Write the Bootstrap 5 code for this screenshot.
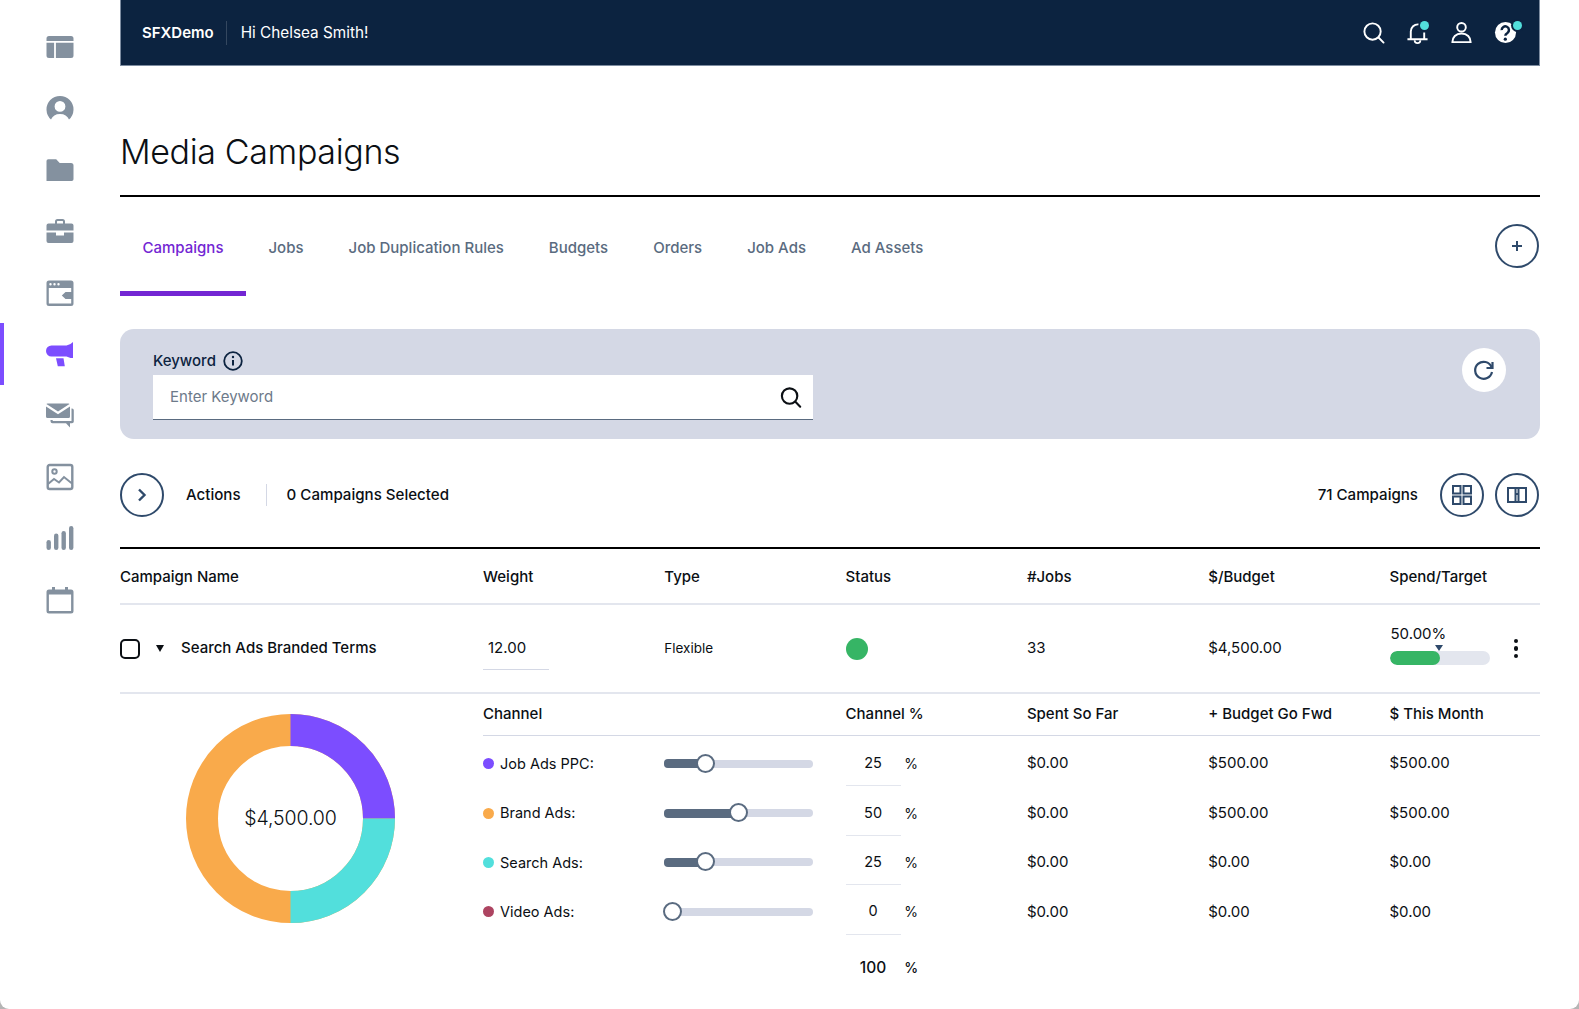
<!DOCTYPE html>
<html lang="en">
<head>
<meta charset="utf-8">
<title>Media Campaigns</title>
<link href="https://cdn.jsdelivr.net/npm/bootstrap@5.3.0/dist/css/bootstrap.min.css" rel="stylesheet">
<style>
html,body{height:100%;}
body{font-family:Inter,"Liberation Sans",sans-serif;color:#0b0f14;font-size:15px;background:#b5b5b5;overflow:hidden;}
.app-shell{background:#fff;border-radius:0 0 9px 9px;}
.side-rail{width:120px;flex:none;padding-top:16.500px;}
.rail-item{height:61.4px;display:flex;align-items:center;justify-content:center;color:#84919f;border-left:4px solid transparent;padding-right:5px;}
.rail-item.is-on{color:#7c4dff;border-left-color:#7c4dff;}
.rail-item svg{width:28px;height:28px;display:block;}
.page-wrap{width:1420px;flex:none;}
.top-strip{height:66px;background:#0c2340;border-bottom:1px solid #7d8ca0;border-left:1px solid #7d8ca0;border-right:1px solid #7d8ca0;padding:0 12px 0 21px;color:#fff;}
.brand-name{font-weight:600;font-size:15px;padding-right:12px;border-right:1px solid #34475f;line-height:24px;}
.hello{font-size:15.3px;padding:1px 0 0 14px;font-weight:400;}
.top-ico{width:44px;height:44px;position:relative;display:flex;align-items:center;justify-content:center;}
.top-ico svg{width:23px;height:23px;}
.teal-pip{position:absolute;width:9px;height:9px;border-radius:50%;background:#52dfdc;top:10px;right:10px;}
.teal-pip.is-ringed{right:5px;box-shadow:0 0 0 2px #0c2340;}
.page-head{font-weight:300;font-size:34px;line-height:44px;margin:0;padding:64px 0 21px 0;border-bottom:2px solid #000;color:#0b0f14;letter-spacing:-.35px;}
.tab-row{height:99px;}
.tab-row .nav-link{color:#5a6b80;font-weight:500;font-size:15px;padding:0 22.500px;height:99px;line-height:102px;border-bottom:5px solid transparent;}
.tab-row .nav-link.active{color:#7326d3;border-bottom-color:#7326d3;}
.ring-btn{width:44px;height:44px;border:2px solid #2f4a6b;border-radius:50%;background:#fff;padding:0;color:#2f4a6b;display:flex;align-items:center;justify-content:center;flex:none;}
.ring-btn svg{width:22px;height:22px;}
.tail-gap{margin-right:1px;}
.tab-add{margin-bottom:2px;}
.filter-box{height:110px;margin-top:33px;background:#d4d8e5;border-radius:14px;padding:18px 33px 0 33px;}
.filter-label{font-size:15px;font-weight:500;color:#0c2340;line-height:24px;height:28px;gap:7px;}
.key-field{width:660px;height:45px;background:#fff;border-bottom:1px solid #5a6b80;padding:0 11px 0 17px;}
.key-field .form-control{border:0;border-radius:0;padding:0;font-size:15px;box-shadow:none;background:transparent;color:#0b0f14;}
.key-field .form-control::placeholder{color:#6d7a8a;opacity:1;}
.reload-btn{width:44px;height:44px;background:#fff;border:0;border-radius:50%;padding:0;color:#2f4a6b;display:flex;align-items:center;justify-content:center;margin-top:1px;margin-right:1px;}
.act-row{height:110px;border-bottom:2px solid #000;padding-top:3px;}
.act-txt{font-weight:500;font-size:15.100px;padding-top:1px;}
.act-gap{margin-left:22px;}
.act-sep{width:1px;height:22px;background:#d4d8e5;margin:0 20px 0 25px;}
.count-gap{margin-right:22px;}
.grid-seven{display:grid;grid-template-columns:363px 181.300px 181.300px 181.300px 181.300px 181.300px 1fr;align-items:center;}
.head-row{height:56px;padding-top:2px;border-bottom:2px solid #e3e6ee;font-weight:500;font-size:15px;}
.camp-row{height:89px;border-bottom:2px solid #e3e6ee;font-size:15px;}
.camp-name{font-weight:500;font-size:15px;}
.tick-box{width:20px;height:20px;border:2px solid #0b0f14;border-radius:5px;margin-right:16px;flex:none;}
.mini-tri{width:0;height:0;border-left:4.500px solid transparent;border-right:4.500px solid transparent;border-top:7px solid #0b0f14;margin-right:17px;}
.weight-val{width:66px;height:42px;border-bottom:1px solid #d4d8e5;padding:9px 0 0 5px;line-height:22px;}
.type-val{font-size:13.500px;}
.stat-dot{width:22px;height:22px;border-radius:50%;background:#36b565;display:block;}
.spend-wrap{position:relative;width:100px;margin-top:-8px;margin-left:1px;}
.spend-pct{line-height:20px;font-weight:400;font-size:15px;}
.spend-bar{height:14px;border-radius:7px;background:#e3e6ee;margin-top:7px;overflow:hidden;}
.spend-fill{height:100%;border-radius:7px;background:#36b565;}
.spend-mark{position:absolute;top:21px;left:45px;width:0;height:0;border-left:4.500px solid transparent;border-right:4.500px solid transparent;border-top:6px solid #2f4a6b;}
.kebab{position:absolute;right:22px;top:0;bottom:0;display:flex;flex-direction:column;justify-content:center;gap:3px;}
.kebab i{display:block;width:4.500px;height:4.500px;border-radius:50%;background:#0b0f14;}
.detail-wrap{display:grid;grid-template-columns:363px 1fr;}
.ring-cell{height:270px;position:relative;}
.ring-svg{position:absolute;left:66px;top:20px;width:209px;height:209px;}
.ring-sum{position:absolute;left:66px;top:20px;width:209px;height:209px;display:flex;align-items:center;justify-content:center;font-size:19.500px;font-weight:300;letter-spacing:-.1px;}
.grid-six{display:grid;grid-template-columns:181.300px 181.300px 181.300px 181.300px 181.300px 1fr;align-items:center;}
.sub-head{height:42px;border-bottom:1px solid #d4d8e5;font-weight:500;font-size:15px;}
.sub-list{padding-top:3px;}
.sub-row{height:49.400px;font-size:15px;}
.sub-label{display:flex;align-items:center;font-size:14.500px;}
.chan-dot{width:11px;height:11px;border-radius:50%;margin-right:6px;flex:none;}
.slide-track{width:149px;height:8px;border-radius:4px;background:#d4d8e5;position:relative;}
.slide-fill{position:absolute;left:0;top:-.5px;height:9px;border-radius:4px;background:#5a6b80;}
.slide-knob{position:absolute;top:-6px;width:19px;height:19px;border-radius:50%;background:#fff;border:2px solid #5a6b80;}
.pct-cell{display:flex;align-items:center;height:100%;font-size:14.500px;}
.pct-input{width:55px;height:47.400px;padding-top:2px;align-self:flex-start;text-align:center;border-bottom:1px solid #e3e6ee;display:flex;align-items:center;justify-content:center;}
.pct-sign{margin-left:3px;width:15px;text-align:center;font-size:14px;}
.sum-row{height:62px;font-weight:500;}
.sum-row .pct-input{font-size:15.500px;align-self:center;padding-top:0;height:auto;}
</style>
</head>
<body>
<div class="app-shell d-flex h-100">
  <nav class="side-rail">
    <div class="rail-item"><svg viewBox="0 0 28 28"><path fill="currentColor" fill-rule="evenodd" d="M3 3h22a2.500 2.500 0 0 1 2.500 2.500V8H.5V5.500A2.500 2.500 0 0 1 3 3zM.5 9.800h7.600V25H3a2.500 2.500 0 0 1-2.500-2.500zM9.900 9.800h17.600v12.700A2.500 2.500 0 0 1 25 25H9.900z"/></svg></div>
    <div class="rail-item"><svg viewBox="0 0 28 28"><path fill="currentColor" fill-rule="evenodd" d="M5 24.500A13.500 13.500 0 1 1 23 24.500C21.500 21 18.500 19 14 19S6.500 21 5 24.500zM14 6a5.400 5.400 0 1 0 0 10.800A5.400 5.400 0 0 0 14 6z"/></svg></div>
    <div class="rail-item"><svg viewBox="0 0 28 28"><path fill="currentColor" d="M.5 5A1.800 1.800 0 0 1 2.300 3.200h7.900l3.500 3.800h11.300a2.500 2.500 0 0 1 2.500 2.500v13.700a1.800 1.800 0 0 1-1.800 1.800H.5z"/></svg></div>
    <div class="rail-item"><svg viewBox="0 0 28 28"><path fill="currentColor" fill-rule="evenodd" d="M9 6.500V4.500A2.500 2.500 0 0 1 11.500 2h5A2.500 2.500 0 0 1 19 4.500v2h6.500a2 2 0 0 1 2 2v5H.5v-5a2 2 0 0 1 2-2zm2 0h6V4.500a.5.5 0 0 0-.5-.5h-5a.5.5 0 0 0-.5.5zM.5 15.500h9.500v3h8v-3h9.500v8.500a2 2 0 0 1-2 2h-23a2 2 0 0 1-2-2z"/></svg></div>
    <div class="rail-item"><svg viewBox="0 0 28 28"><path fill="currentColor" fill-rule="evenodd" d="M3 1.500h22a2.500 2.500 0 0 1 2.500 2.500v20.500A2.500 2.500 0 0 1 25 27H3a2.500 2.500 0 0 1-2.500-2.500V4A2.500 2.500 0 0 1 3 1.500zM2.800 9v15.200c0 .2.100.3.300.3h21.800c.2 0 .3-.1.300-.3V20h-5.700l-3.700-3.500 3.700-3.500h5.700V9zM4.500 4a1.200 1.200 0 1 0 0 2.400 1.200 1.200 0 0 0 0-2.400zm4 0a1.200 1.200 0 1 0 0 2.400 1.200 1.200 0 0 0 0-2.400zm4 0a1.200 1.200 0 1 0 0 2.400 1.200 1.200 0 0 0 0-2.400z"/></svg></div>
    <div class="rail-item is-on"><svg viewBox="0 0 28 28"><path fill="currentColor" d="M5.500 5.500H20.500L24.500 4 27 2V18H24.500L20.500 16.500H5.500a5.500 5.500 0 0 1 0-11zM10 18.300h7.500l1.300 8H11.800z"/></svg></div>
    <div class="rail-item"><svg viewBox="0 0 28 28"><path fill="currentColor" d="M1.500 1.500h21a1.500 1.500 0 0 1 1 .5L12 9.500.4 2A1.500 1.500 0 0 1 1.500 1.500zM0 4.500l12 7.800 12-7.800V14.500a1.500 1.500 0 0 1-1.500 1.500h-21A1.500 1.500 0 0 1 0 14.500zM25.500 6.500h.5a1.800 1.800 0 0 1 1.800 1.800v11.200A1.800 1.800 0 0 1 26 21.300h-2v4.200l-4-4.200H6.500a2 2 0 0 1-2-2V18h2.200v1.100h18.800z"/></svg></div>
    <div class="rail-item"><svg viewBox="0 0 28 28" fill="none" stroke="currentColor" stroke-width="2.400"><rect x="1.700" y="2" width="24.600" height="24" rx="2"/><circle cx="8.500" cy="8.500" r="2.200" stroke-width="2"/><path d="M2 21l6-5 5 3.500 5-5.500 8 6.500" stroke-width="2"/></svg></div>
    <div class="rail-item"><svg viewBox="0 0 28 28"><rect x=".5" y="16" width="4.400" height="10" rx="2.200" fill="currentColor"/><rect x="8" y="9.500" width="4.400" height="16.500" rx="2.200" fill="currentColor"/><rect x="15.500" y="7" width="4.400" height="19" rx="2.200" fill="currentColor"/><rect x="23" y="2" width="4.400" height="24" rx="2.200" fill="currentColor"/></svg></div>
    <div class="rail-item"><svg viewBox="0 0 28 28"><path fill="currentColor" fill-rule="evenodd" d="M6 1h3v2.500h10V1h3v2.500h3a2.500 2.500 0 0 1 2.500 2.500v19A2.500 2.500 0 0 1 25 27.500H3A2.500 2.500 0 0 1 .5 25V6A2.500 2.500 0 0 1 3 3.500h3zM2.900 8.500v16.200c0 .2.100.4.400.4h21.400c.3 0 .4-.2.400-.4V8.500z"/></svg></div>
  </nav>
  <main class="page-wrap">
    <header class="top-strip d-flex align-items-center">
      <span class="brand-name">SFXDemo</span>
      <span class="hello">Hi Chelsea Smith!</span>
      <div class="ms-auto d-flex">
        <span class="top-ico"><svg viewBox="0 0 24 24" fill="none" stroke="#fff" stroke-width="2"><circle cx="11" cy="11" r="8.500"/><path d="M17.500 17.500l5 5" stroke-linecap="round"/></svg></span>
        <span class="top-ico"><svg viewBox="0 0 24 24" fill="none" stroke="#fff" stroke-width="2"><path d="M5 19V11a7.500 7.500 0 0 1 8-7.500M19 12v7M1.500 19h21"/><path d="M9 20a3 3 0 0 0 6 0" stroke-width="1.800"/></svg><span class="teal-pip"></span></span>
        <span class="top-ico"><svg viewBox="0 0 24 24" fill="none" stroke="#fff" stroke-width="2"><circle cx="12" cy="6.500" r="4.500"/><path d="M2.500 22c0-5 3.500-9 9.500-9s9.500 4 9.500 9z"/></svg></span>
        <span class="top-ico"><svg viewBox="0 0 24 24"><circle cx="12" cy="12" r="11" fill="#fff"/><path d="M8 9.500a3.800 3.800 0 1 1 6 3c-1.300.8-2.200 1.500-2.200 3" fill="none" stroke="#0c2340" stroke-width="2.600"/><circle cx="11.800" cy="19" r="1.700" fill="#0c2340"/></svg><span class="teal-pip is-ringed"></span></span>
      </div>
    </header>
    <h1 class="page-head">Media Campaigns</h1>
    <div class="tab-row d-flex align-items-center justify-content-between">
      <ul class="nav">
        <li class="nav-item"><a class="nav-link active" href="#">Campaigns</a></li>
        <li class="nav-item"><a class="nav-link" href="#">Jobs</a></li>
        <li class="nav-item"><a class="nav-link" href="#">Job Duplication Rules</a></li>
        <li class="nav-item"><a class="nav-link" href="#">Budgets</a></li>
        <li class="nav-item"><a class="nav-link" href="#">Orders</a></li>
        <li class="nav-item"><a class="nav-link" href="#">Job Ads</a></li>
        <li class="nav-item"><a class="nav-link" href="#">Ad Assets</a></li>
      </ul>
      <button class="ring-btn tail-gap tab-add" type="button" aria-label="Add"><svg viewBox="0 0 22 22" fill="none" stroke="currentColor" stroke-width="2"><path d="M11 6v10M6 11h10"/></svg></button>
    </div>
    <section class="filter-box d-flex justify-content-between align-items-start">
      <div>
        <div class="filter-label d-flex align-items-center">Keyword <svg width="20" height="20" viewBox="0 0 20 20" fill="none" stroke="#0c2340" stroke-width="1.800"><circle cx="10" cy="10" r="8.800"/><path d="M10 9v5.500" stroke-width="2"/><circle cx="10" cy="6" r="1.200" fill="#0c2340" stroke="none"/></svg></div>
        <div class="key-field d-flex align-items-center">
          <input class="form-control" type="text" placeholder="Enter Keyword">
          <svg width="24" height="24" viewBox="0 0 24 24" fill="none" stroke="#0b0f14" stroke-width="2.200"><circle cx="11" cy="11" r="8"/><path d="M17 17l5 5" stroke-linecap="round"/></svg>
        </div>
      </div>
      <button class="reload-btn" type="button" aria-label="Reset"><svg width="24" height="24" viewBox="0 0 24 24" fill="none" stroke="currentColor" stroke-width="2.200"><path d="M19.500 9A8.500 8.500 0 1 0 20 14"/><path d="M20.500 4v6h-6"/></svg></button>
    </section>
    <section class="act-row d-flex align-items-center">
      <button class="ring-btn" type="button" aria-label="Open actions"><svg viewBox="0 0 22 22" fill="none" stroke="currentColor" stroke-width="2.400"><path d="M8 5.500l5.500 5.500L8 16.500"/></svg></button>
      <span class="act-txt act-gap">Actions</span>
      <span class="act-sep"></span>
      <span class="act-txt">0 Campaigns Selected</span>
      <span class="act-txt ms-auto count-gap">71 Campaigns</span>
      <div class="d-flex tail-gap" style="gap:11px">
        <button class="ring-btn" type="button" aria-label="Grid view"><svg viewBox="0 0 22 22" fill="none" stroke="currentColor" stroke-width="2"><rect x="2" y="2" width="7.500" height="7.500"/><rect x="12.500" y="2" width="7.500" height="7.500"/><rect x="2" y="12.500" width="7.500" height="7.500"/><rect x="12.500" y="12.500" width="7.500" height="7.500"/></svg></button>
        <button class="ring-btn" type="button" aria-label="Table view"><svg viewBox="0 0 22 22" fill="none" stroke="currentColor" stroke-width="2"><rect x="2" y="4" width="18" height="14"/><path d="M9.500 4v14M12.500 4v14M9.500 10h3"/></svg></button>
      </div>
    </section>
    <div class="grid-seven head-row">
      <div>Campaign Name</div><div>Weight</div><div>Type</div><div>Status</div><div>#Jobs</div><div>$/Budget</div><div>Spend/Target</div>
    </div>
    <div class="grid-seven camp-row position-relative">
      <div class="d-flex align-items-center"><span class="tick-box"></span><span class="mini-tri"></span><span class="camp-name">Search Ads Branded Terms</span></div>
      <div><div class="weight-val">12.00</div></div>
      <div class="type-val">Flexible</div>
      <div><span class="stat-dot"></span></div>
      <div>33</div>
      <div>$4,500.00</div>
      <div>
        <div class="spend-wrap">
          <div class="spend-pct">50.00%</div>
          <div class="spend-bar"><div class="spend-fill" style="width:50%"></div></div>
          <span class="spend-mark"></span>
        </div>
      </div>
      <div class="kebab"><i></i><i></i><i></i></div>
    </div>
    <div class="detail-wrap">
      <div class="ring-cell">
        <svg class="ring-svg" viewBox="0 0 209 209" fill="none" stroke-width="32"><circle cx="104.500" cy="104.500" r="88.500" stroke="#f9aa4b"/><path d="M104.500 16A88.500 88.500 0 0 1 193 104.500" stroke="#7c4dff"/><path d="M193 104.500A88.500 88.500 0 0 1 104.500 193" stroke="#52dfdc"/></svg>
        <div class="ring-sum">$4,500.00</div>
      </div>
      <div>
        <div class="grid-six sub-head"><div>Channel</div><div></div><div>Channel %</div><div>Spent So Far</div><div>+ Budget Go Fwd</div><div>$ This Month</div></div>
        <div class="sub-list">
        <div class="grid-six sub-row"><div class="sub-label"><span class="chan-dot" style="background:#7c4dff"></span>Job Ads PPC:</div><div><div class="slide-track"><div class="slide-fill" style="width:41px"></div><div class="slide-knob" style="left:32px"></div></div></div><div class="pct-cell"><span class="pct-input">25</span><span class="pct-sign">%</span></div><div>$0.00</div><div>$500.00</div><div>$500.00</div></div>
        <div class="grid-six sub-row"><div class="sub-label"><span class="chan-dot" style="background:#f9aa4b"></span>Brand Ads:</div><div><div class="slide-track"><div class="slide-fill" style="width:74px"></div><div class="slide-knob" style="left:65px"></div></div></div><div class="pct-cell"><span class="pct-input">50</span><span class="pct-sign">%</span></div><div>$0.00</div><div>$500.00</div><div>$500.00</div></div>
        <div class="grid-six sub-row"><div class="sub-label"><span class="chan-dot" style="background:#52dfdc"></span>Search Ads:</div><div><div class="slide-track"><div class="slide-fill" style="width:41px"></div><div class="slide-knob" style="left:32px"></div></div></div><div class="pct-cell"><span class="pct-input">25</span><span class="pct-sign">%</span></div><div>$0.00</div><div>$0.00</div><div>$0.00</div></div>
        <div class="grid-six sub-row"><div class="sub-label"><span class="chan-dot" style="background:#ad4461"></span>Video Ads:</div><div><div class="slide-track"><div class="slide-knob" style="left:-1px"></div></div></div><div class="pct-cell"><span class="pct-input">0</span><span class="pct-sign">%</span></div><div>$0.00</div><div>$0.00</div><div>$0.00</div></div>
        <div class="grid-six sum-row"><div></div><div></div><div class="pct-cell"><span class="pct-input border-0">100</span><span class="pct-sign">%</span></div></div>
        </div>
      </div>
    </div>
  </main>
</div>
</body>
</html>
